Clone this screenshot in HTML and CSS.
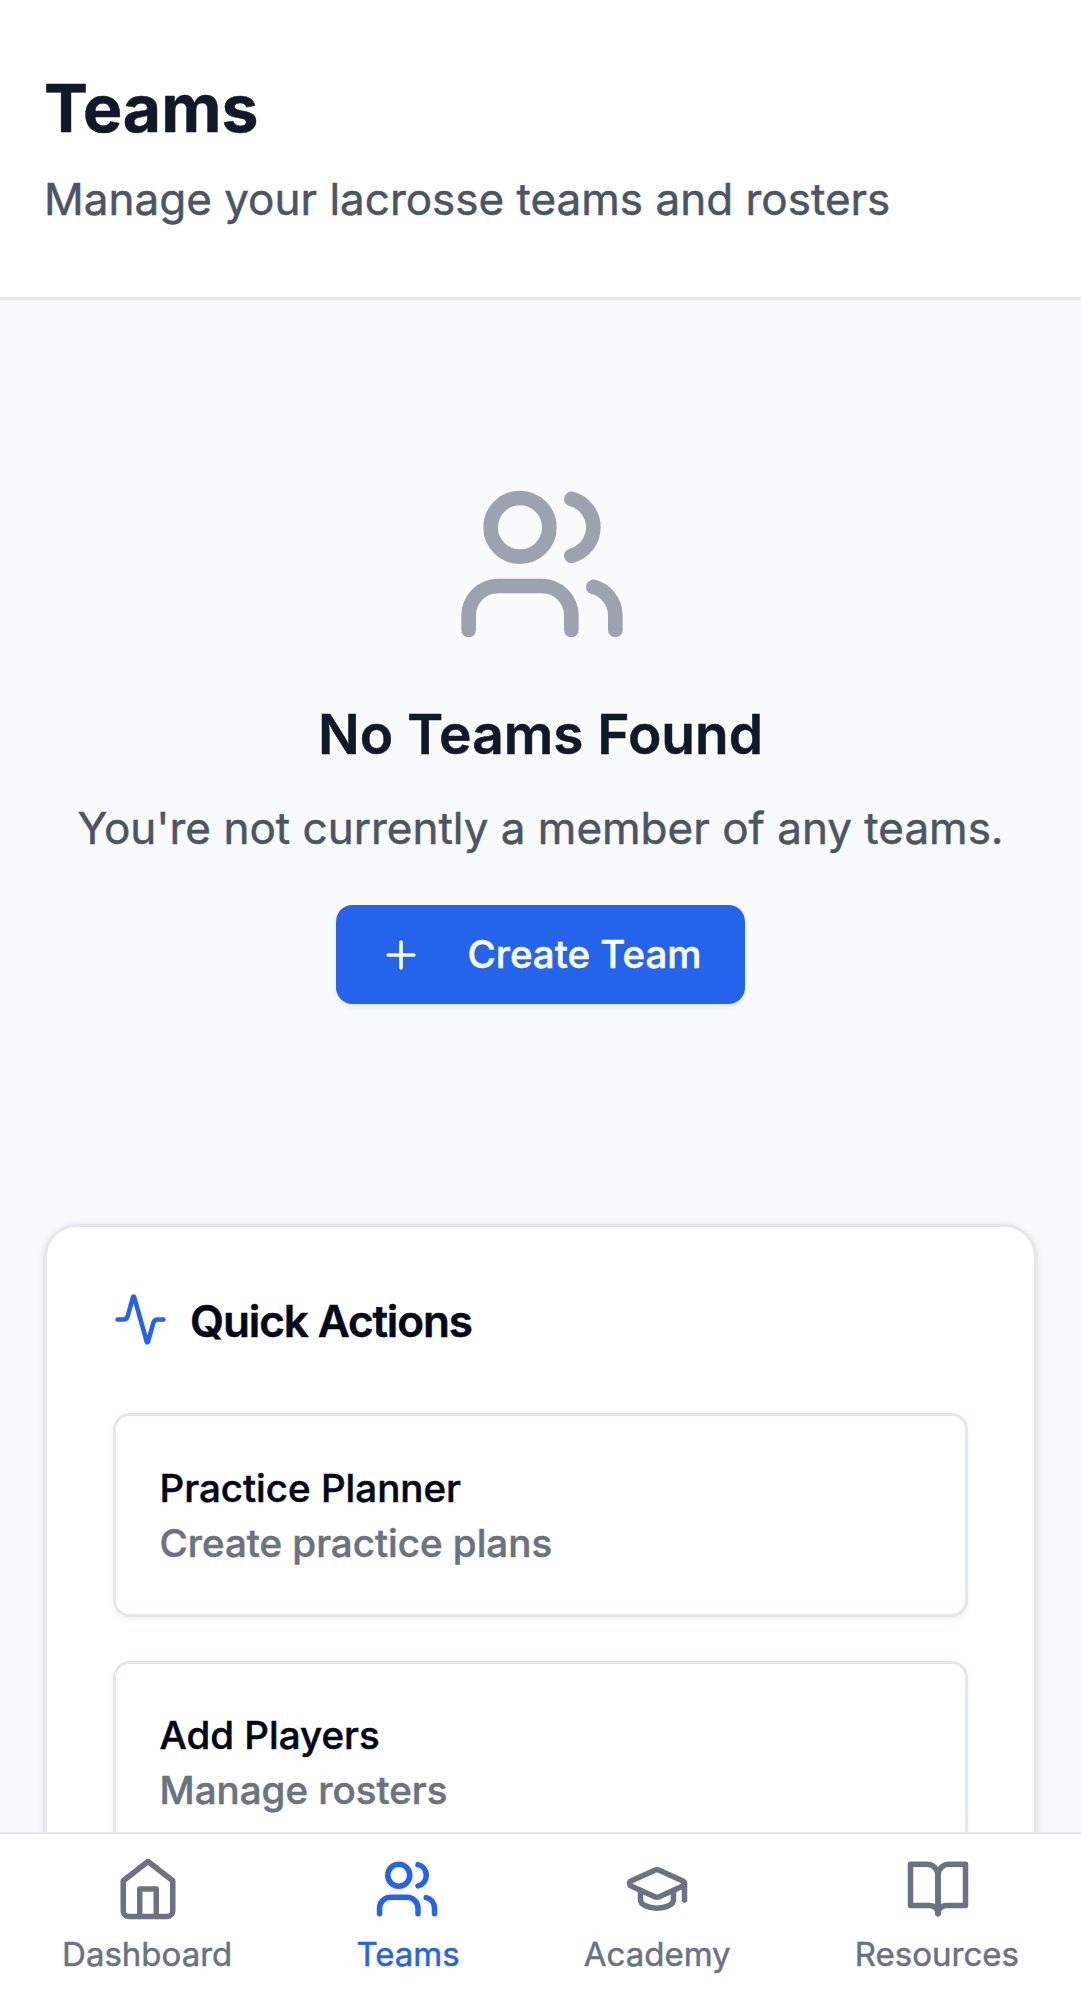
FILE: index.html
```html
<!DOCTYPE html>
<html lang="en">
<head>
<meta charset="utf-8">
<title>Teams</title>
<link rel="stylesheet" href="styles.css">
</head>
<body>
<div class="app">
  <header class="page-header">
    <h1 class="page-title">Teams</h1>
    <p class="page-subtitle">Manage your lacrosse teams and rosters</p>
  </header>
  <main class="content">
    <section class="empty">
      <svg class="icon empty-icon" viewBox="0 0 24 24"><path d="M16 21v-2a4 4 0 0 0-4-4H6a4 4 0 0 0-4 4v2"/><circle cx="9" cy="7" r="4"/><path d="M22 21v-2a4 4 0 0 0-3-3.87"/><path d="M16 3.13a4 4 0 0 1 0 7.75"/></svg>
      <h2 class="empty-title">No Teams Found</h2>
      <p class="empty-text">You're not currently a member of any teams.</p>
      <button class="create" type="button">
        <svg class="icon create-icon" viewBox="0 0 24 24"><path d="M5 12h14"/><path d="M12 5v14"/></svg>
        <span>Create Team</span>
      </button>
    </section>
    <section class="card">
      <h3 class="card-title">
        <svg class="icon card-icon" viewBox="0 0 24 24"><path d="M22 12h-2.48a2 2 0 0 0-1.93 1.46l-2.35 8.36a.25.25 0 0 1-.48 0L9.24 2.18a.25.25 0 0 0-.48 0l-2.35 8.36A2 2 0 0 1 4.49 12H2"/></svg>
        <span class="card-name">Quick Actions</span>
      </h3>
      <div class="actions">
        <a class="action"><span>Practice Planner</span><span class="action-note">Create practice plans</span></a>
        <a class="action"><span>Add Players</span><span class="action-note">Manage rosters</span></a>
      </div>
    </section>
  </main>
  <nav class="tabs">
    <a class="tab"><svg class="icon tab-icon tab-icon-home" viewBox="0 0 24 24"><path d="m3 9 9-7 9 7v11a2 2 0 0 1-2 2H5a2 2 0 0 1-2-2z"/><path d="M9 22V12h6v10"/></svg><span>Dashboard</span></a>
    <a class="tab tab-active"><svg class="icon tab-icon tab-icon-teams" viewBox="0 0 24 24"><path d="M16 21v-2a4 4 0 0 0-4-4H6a4 4 0 0 0-4 4v2"/><circle cx="9" cy="7" r="4"/><path d="M22 21v-2a4 4 0 0 0-3-3.87"/><path d="M16 3.13a4 4 0 0 1 0 7.75"/></svg><span>Teams</span></a>
    <a class="tab"><svg class="icon tab-icon" viewBox="0 0 24 24"><path d="M21.42 10.922a1 1 0 0 0-.019-1.838L12.83 5.18a2 2 0 0 0-1.66 0L2.6 9.08a1 1 0 0 0 0 1.832l8.57 3.908a2 2 0 0 0 1.66 0z"/><path d="M22 10v6"/><path d="M6 12.5V16a6 3 0 0 0 12 0v-3.5"/></svg><span>Academy</span></a>
    <a class="tab"><svg class="icon tab-icon tab-icon-book" viewBox="0 0 24 24"><path d="M2 3h6a4 4 0 0 1 4 4v14a3 3 0 0 0-3-3H2z"/><path d="M22 3h-6a4 4 0 0 0-4 4v14a3 3 0 0 1 3-3h7z"/></svg><span>Resources</span></a>
  </nav>
</div>
</body>
</html>
```
FILE: styles.css
```css
* { box-sizing: border-box; margin: 0; padding: 0; }

body {
  background: #f9fafb;
  color: #020817;
  font-family: Inter, "Liberation Sans", sans-serif;
  -webkit-text-stroke: 0.5px;
  overflow: hidden;
}

.app { display: flex; flex-direction: column; height: 1999px; }

.icon {
  flex: none;
  display: block;
  fill: none;
  stroke: currentColor;
  stroke-width: 2;
  stroke-linecap: round;
  stroke-linejoin: round;
}

.page-header {
  flex: none;
  height: 300px;
  padding: 64px 44px 0;
  background: #fff;
  border-bottom: 3px solid #e5e7eb;
}
.page-title { font-size: 66px; line-height: 88px; font-weight: 700; color: #111827; }
.page-subtitle { margin-top: 14px; font-size: 44px; line-height: 66px; color: #4b5563; }

.content { flex: 1; min-height: 0; overflow: hidden; padding: 176px 44px 0; }

.empty { display: flex; flex-direction: column; align-items: center; height: 748px; }
.empty-icon { width: 176px; height: 176px; margin-left: 2px; color: #9ca3af; }
.empty-title { margin-top: 44px; font-size: 55px; line-height: 77px; font-weight: 600; color: #111827; }
.empty-text { margin-top: 22px; font-size: 44px; line-height: 66px; color: #4b5563; white-space: nowrap; }
.create {
  display: flex;
  align-items: center;
  gap: 44px;
  height: 99px;
  margin-top: 44px;
  padding: 0 43.5px;
  border: 0;
  border-radius: 16.5px;
  background: #2563eb;
  color: #f8fafc;
  font: 500 38.5px/55px Inter, "Liberation Sans", sans-serif;
  -webkit-text-stroke: 0.5px;
  box-shadow: 0 2.75px 5.5px rgba(0, 0, 0, .07);
}
.create-icon { width: 44px; height: 44px; }

.card {
  height: 900px;
  padding: 65px 66px;
  border: 3px solid #e5e7eb;
  border-radius: 33px;
  background: #fff;
  box-shadow: 0 2.75px 8.25px rgba(0, 0, 0, .1), 0 2.75px 5.5px -2.75px rgba(0, 0, 0, .1);
}
.card-title {
  display: flex;
  align-items: center;
  gap: 22px;
  font-size: 44px;
  line-height: 55px;
  font-weight: 600;
  letter-spacing: -1.1px;
}
.card-name { padding-top: 3px; line-height: 52px; }
.card-icon { width: 55px; height: 55px; color: #2563eb; }
.actions { display: flex; flex-direction: column; gap: 44px; margin-top: 66px; }
.action {
  display: flex;
  flex-direction: column;
  justify-content: center;
  height: 203.5px;
  padding: 2px 43.5px 0;
  border: 3px solid #e2e8f0;
  border-radius: 16.5px;
  font-size: 38.5px;
  line-height: 55px;
  font-weight: 500;
  box-shadow: 0 2.75px 5.5px rgba(0, 0, 0, .05);
}
.action-note { color: #6b7280; }

.tabs {
  flex: none;
  display: flex;
  justify-content: space-around;
  height: 167px;
  padding-top: 22px;
  border-top: 2px solid #e5e7eb;
  background: #fff;
}
.tab {
  display: flex;
  flex-direction: column;
  align-items: center;
  gap: 10px;
  font-size: 33px;
  line-height: 44px;
  color: #6b7280;
}
.tab-active { color: #2563eb; }
.tab-icon { width: 66px; height: 66px; }
.tab-icon-home { margin-left: 2px; }
.tab-icon-teams { margin-right: 2px; }
.tab-icon-book { margin-left: 2px; }
```
